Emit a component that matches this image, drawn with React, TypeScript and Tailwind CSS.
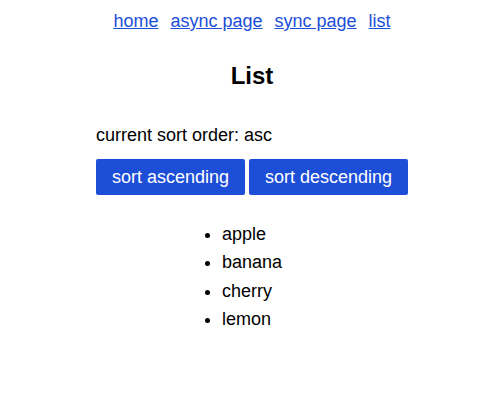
const fruits = ["apple", "banana", "cherry", "lemon"];

export default function App() {
  return (
    <div className="min-h-[400px] bg-white pl-[4px] font-['Liberation_Sans',Arial,sans-serif] text-black">
      <nav className="flex justify-center gap-[12px] pt-[8px] text-[18px] leading-[27px]">
        <a href="#" className="text-[#1d4ed8] underline">home</a>
        <a href="#" className="text-[#1d4ed8] underline">async page</a>
        <a href="#" className="text-[#1d4ed8] underline">sync page</a>
        <a href="#" className="text-[#1d4ed8] underline">list</a>
      </nav>

      <h1 className="mt-[23px] text-center text-[24px] font-bold leading-[36px]">List</h1>

      <div className="mx-auto mt-[28px] w-[312px]">
        <p className="text-[18px] leading-[27px]">current sort order: asc</p>
        <div className="mt-[10px] flex gap-[4px]">
          <button className="h-[36px] w-[149px] rounded-[2px] bg-[#1d4ed8] text-[18px] text-white">
            sort ascending
          </button>
          <button className="h-[36px] w-[159px] rounded-[2px] bg-[#1d4ed8] text-[18px] text-white">
            sort descending
          </button>
        </div>

        <ul className="mt-[25px] list-disc pl-[126px] text-[18px] leading-[28.33px]">
          {fruits.map((f) => (
            <li key={f}>{f}</li>
          ))}
        </ul>
      </div>
    </div>
  );
}
